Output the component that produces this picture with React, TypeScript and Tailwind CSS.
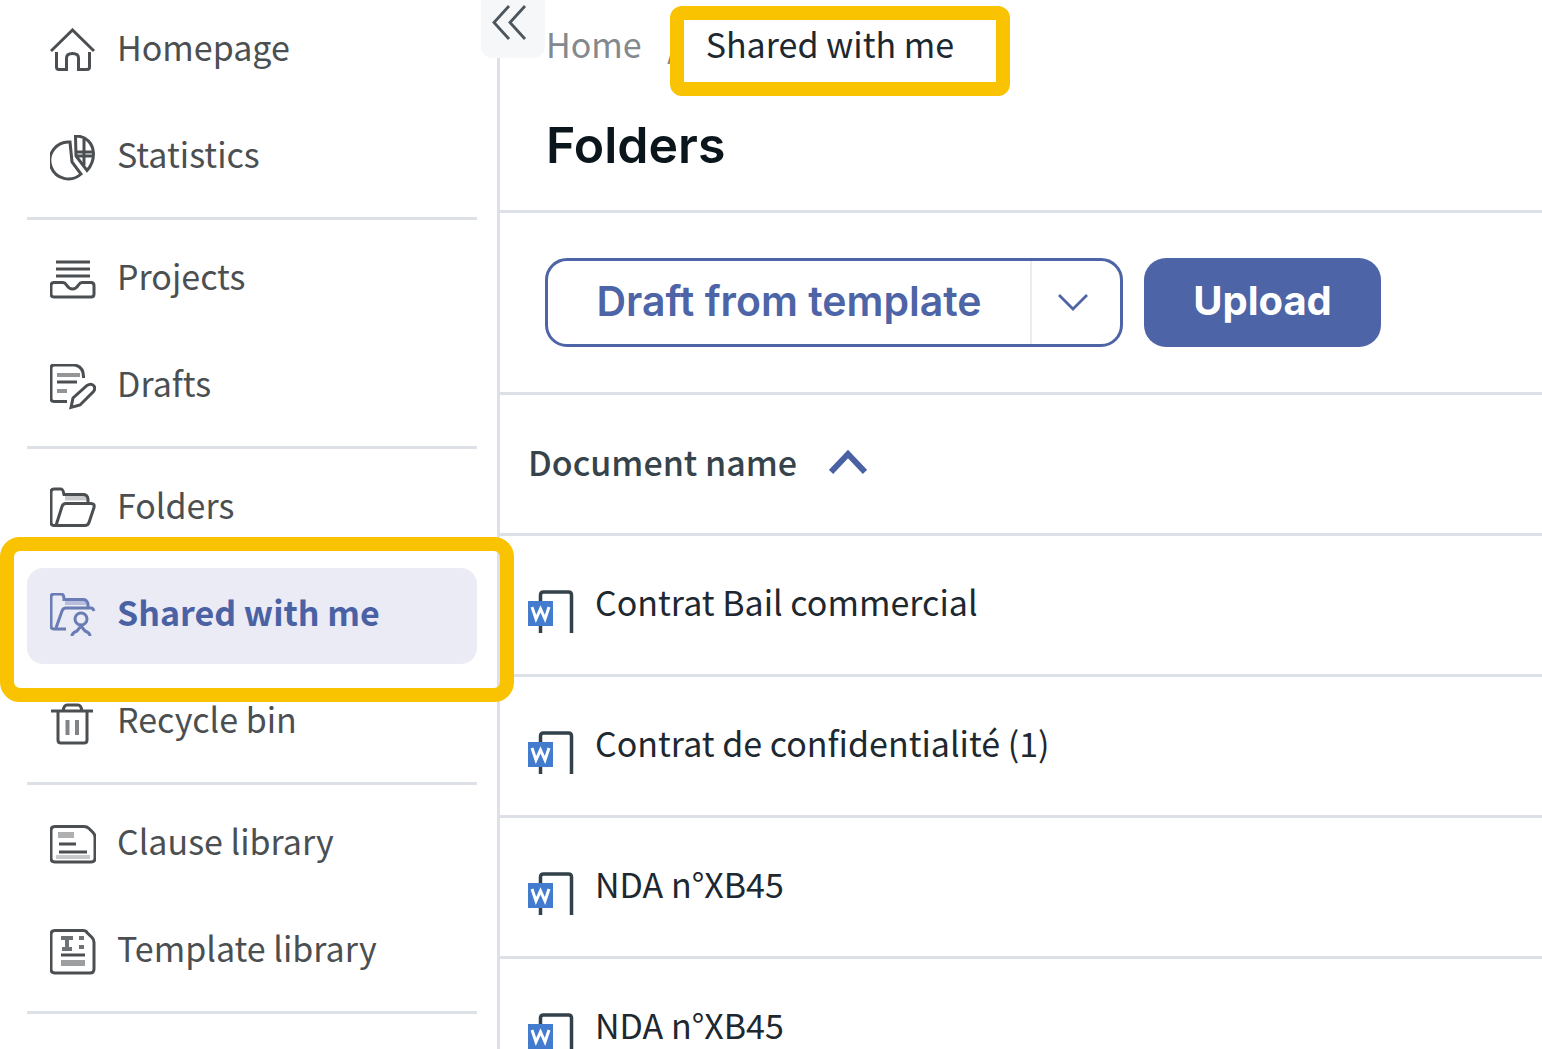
import { Fragment, type ReactNode } from "react";
import clsx from "clsx";

type NavItem = { label: string; icon: ReactNode; active?: boolean };

const NAV_GROUPS: NavItem[][] = [
  [
    {
      label: "Homepage",
      icon: (
        <>
          <path d="M1 23 22.500 2 44 23" />
          <path d="M6.500 24v15q0 2.500 2.500 2.500h7.500V30q0-4.500 6-4.500t6 4.500v11.500H37q2.500 0 2.500-2.500V24" />
        </>
      ),
    },
    {
      label: "Statistics",
      icon: (
        <>
          <path d="M20 7A18.500 18.500 0 1 0 31 39L22 27Z" />
          <path d="M25.500 1C36 1 43 8 43.500 18.500q0 10-6.500 17L26 21Z" />
          <path d="M27 17h16M27 21h16M34 4v26" />
        </>
      ),
    },
  ],
  [
    {
      label: "Projects",
      icon: (
        <>
          <path d="M6 5h34M6 12h34M6 19h34" />
          <path d="M4 25.500h9q2 0 3.500 2.500 2.500 4 6 4t6-4q1.500-2.500 3.500-2.500h9q3 0 3 3V37q0 3-3 3H4q-3 0-3-3v-8.500q0-3 3-3Z" />
        </>
      ),
    },
    {
      label: "Drafts",
      icon: (
        <>
          <path d="M17 37.500H4q-3 0-3-3V4q0-3 3-3h21q9 2 8.500 13" />
          <path d="M7 18h20" />
          <path d="M7 11h23M7 27h10" strokeWidth="4" opacity=".6" />
          <path d="M21 43.500 23 34 37 21.500q4-2.500 6.500 0t0 6L30 41Z" />
        </>
      ),
    },
  ],
  [
    {
      label: "Folders",
      icon: (
        <>
          <path d="M4 39.500q-3 0-3-3V6q0-3 3-3h7q2 0 3 5.500h19q4.500 0 5 4.500v4" />
          <path d="M15 12h22" strokeWidth="5" opacity=".3" />
          <path d="M4 39.500h31q3 0 4-3l5-15q1-4-3-4H16q-3 0-4 3L6 39.500" />
        </>
      ),
    },
    {
      label: "Shared with me",
      active: true,
      icon: (
        <>
          <path d="M16 36H4q-3 0-3-3V4q0-3 3-3h7q3 0 3 5.500h19q4 0 5 4.500v4" />
          <path d="M15 10h22" strokeWidth="4" opacity=".4" />
          <path d="M6 35l6-17q1-3 4-3h25q2 0 3 3" />
          <circle cx="31" cy="26" r="6" />
          <path d="M22 43q0-3 5-5l4-5 4 5q5 2 5 5" />
        </>
      ),
    },
    {
      label: "Recycle bin",
      icon: (
        <>
          <path d="M1 11h42M13 11q1-6 4-6h11q3 0 4 6" />
          <path d="M8 12v28q0 3 3 3h23q3 0 3-3V12" />
          <path d="M17.500 20v15M27 20v15" strokeWidth="4" opacity=".7" />
        </>
      ),
    },
  ],
  [
    {
      label: "Clause library",
      icon: (
        <>
          <path d="M5 4.500h29q3 0 5 2l4 4q2 2 2 4.500V36q0 4-4 4H5q-4 0-4-4V8.500q0-4 4-4Z" />
          <path d="M9 22h17M9 30h28" />
          <path d="M8 13h16" strokeWidth="6" opacity=".45" />
          <path d="M6 35h34" strokeWidth="4" opacity=".3" />
        </>
      ),
    },
    {
      label: "Template library",
      icon: (
        <>
          <path d="M5 1.500h28q3 0 4 2l5 5q2 2 2 5V40q0 4-4 4H5q-4 0-4-4V5.500q0-4 4-4Z" />
          <path d="M11 26h24" />
          <path d="M11 9h12M17 9v11M12 20h10M29 9h5M29 18h5" strokeWidth="4" opacity=".8" />
          <path d="M11 34h24" strokeWidth="6" opacity=".55" />
        </>
      ),
    },
  ],
];

const DOCUMENTS = [
  "Contrat Bail commercial",
  "Contrat de confidentialité (1)",
  "NDA n°XB45",
  "NDA n°XB45",
];

function Highlight({ className }: { className: string }) {
  return (
    <span
      aria-hidden
      className={clsx("pointer-events-none absolute z-20 border-[14px] border-[#f9c301]", className)}
    />
  );
}

function SidebarItem({ label, icon, active }: NavItem) {
  return (
    <li className="relative">
      <a
        href="#"
        aria-current={active ? "page" : undefined}
        className={clsx(
          "flex h-24 items-center gap-[21px] rounded-2xl pl-[23px] text-[34px] leading-[48px]",
          active ? "bg-[#ebebf5] font-bold text-[#4a61a4]" : "text-[#4b4f52]",
        )}
      >
        <svg
          viewBox="0 0 46 46"
          className={clsx("size-[46px] shrink-0", active && "opacity-80")}
          fill="none"
          stroke="currentColor"
          strokeWidth="3"
          aria-hidden
        >
          {icon}
        </svg>
        <span className="pb-2">{label}</span>
      </a>
      {active && <Highlight className="-top-[31px] -right-[37px] -bottom-[38px] -left-[27px] rounded-[20px]" />}
    </li>
  );
}

function Sidebar() {
  return (
    <aside className="relative w-[500px] shrink-0 border-r-[3px] border-[#dde0e6] pt-[3px] pr-5 pl-[27px]">
      <nav aria-label="Main">
        {NAV_GROUPS.map((group, i) => (
          <Fragment key={i}>
            <ul className="flex flex-col gap-[11px]">
              {group.map((item) => (
                <SidebarItem key={item.label} {...item} />
              ))}
            </ul>
            <hr className="mt-[11px] mb-3 border-t-[3px] border-[#dde0e6]" />
          </Fragment>
        ))}
      </nav>

      {/* Collapse handle, sits on top of the divider */}
      <button
        type="button"
        aria-label="Collapse menu"
        className="absolute top-0 -right-12 z-10 flex h-[58px] w-16 rounded-b-xl bg-[#f6f7f9] pt-[5px] pl-[11px]"
      >
        <svg viewBox="0 0 36 36" className="size-9" fill="none" stroke="#4b555b" strokeWidth="2.8" aria-hidden>
          <path d="M17 1 2 17.500 17 34M33 1 18 17.500 33 34" />
        </svg>
      </button>
    </aside>
  );
}

function WordIcon() {
  return (
    <svg viewBox="0 0 46 56" className="h-14 w-[46px] shrink-0" aria-hidden>
      <path d="M12.500 56V18q0-3 3-3h25q3 0 3 3v38" fill="none" stroke="#33424a" strokeWidth="3.500" />
      <rect y="24" width="25" height="25" fill="#437ccf" />
      <path d="M4 30l4 12 4.500-10 4.500 10L21 30" fill="none" stroke="#fff" strokeWidth="3" />
    </svg>
  );
}

export default function App() {
  return (
    <div className="flex h-screen overflow-hidden bg-white font-['Noto_Sans_CJK_SC',sans-serif]">
      <Sidebar />

      <main className="min-w-0 flex-1">
        <header className="border-b-[3px] border-[#dde0e6] pt-5 pb-9 pl-[46px]">
          <nav aria-label="Breadcrumb" className="flex text-[34px] leading-[48px]">
            <a href="#" className="relative z-10 text-[#84898e]">
              Home
            </a>
            <span className="w-16 text-center text-[#84898e]">/</span>
            <span aria-current="page" className="relative text-[#1d2830]">
              Shared with me
              <Highlight className="-top-[14px] -right-14 -bottom-7 -left-9 rounded-xl" />
            </span>
          </nav>
          <h1 className="mt-12 font-[Inter,sans-serif] text-[50px] leading-[58px] font-semibold text-[#0b161c]">
            Folders
          </h1>
        </header>

        <div className="flex gap-[21px] border-b-[3px] border-[#dde0e6] py-[45px] pl-[45px] font-[Inter,sans-serif] text-[40px] leading-[48px]">
          <div className="flex h-[89px] w-[578px] overflow-hidden rounded-[22px] border-[3px] border-[#4d64a6] text-[#4d64a6]">
            <button type="button" className="flex-1 pb-1 text-[41px] font-semibold whitespace-nowrap">
              Draft from template
            </button>
            <button
              type="button"
              aria-label="More draft options"
              className="flex w-[90px] items-center border-l-2 border-[#ebecf0] pl-[26px]"
            >
              <svg viewBox="0 0 30 18" className="h-[18px] w-[30px]" fill="none" stroke="currentColor" strokeWidth="2.8" aria-hidden>
                <path d="M1 1 15 15 29 1" />
              </svg>
            </button>
          </div>
          <button type="button" className="h-[89px] w-[237px] rounded-[22px] bg-[#4d64a6] pb-1 font-bold text-white">
            Upload
          </button>
        </div>

        <table className="w-full text-left text-[34px] leading-[48px]">
          <thead>
            <tr className="h-[139px] border-b-[3px] border-[#dde0e6]">
              <th className="pb-1 pl-7 font-medium text-[#36434b]">
                <button type="button" className="flex items-center gap-8">
                  Document name
                  <svg viewBox="0 0 38 26" className="h-[26px] w-[38px]" fill="none" stroke="#4a61a4" strokeWidth="6" aria-hidden>
                    <path d="M2 23 19 5 36 23" />
                  </svg>
                </button>
              </th>
            </tr>
          </thead>
          <tbody>
            {DOCUMENTS.map((name, i) => (
              <tr key={i} className="h-[141px] border-b-[3px] border-[#dde0e6]">
                <td className="pl-7">
                  <div className="flex items-center gap-[21px]">
                    <WordIcon />
                    <a href="#" className="pb-1.5 text-[#1d2830]">
                      {name}
                    </a>
                  </div>
                </td>
              </tr>
            ))}
          </tbody>
        </table>
      </main>
    </div>
  );
}
